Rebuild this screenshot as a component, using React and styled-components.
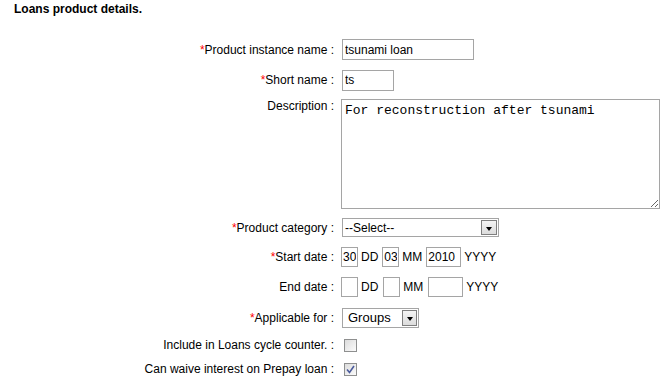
import React from "react";
import styled, { createGlobalStyle } from "styled-components";

const GlobalStyle = createGlobalStyle`
    body {
        margin: 0;
        background: #fff;
        font-family: "Liberation Sans", Arial, sans-serif;
        font-size: 12px;
        color: #000;
    }
`;

const Page = styled.div`
    width: 666px;
    height: 385px;
    padding: 2px 14px 0;
    box-sizing: border-box;
    overflow: hidden;
`;

const Title = styled.h1`
    margin: 0;
    font-size: 12px;
    line-height: 14px;
    font-weight: 700;
`;

const Form = styled.div`
    margin-top: 18px;
    margin-left: -14px;
    display: flex;
    flex-direction: column;
`;

const Row = styled.div`
    display: grid;
    grid-template-columns: 334px auto;
    column-gap: 8px;
    align-items: ${(p) => (p.$top ? "start" : "center")};
    height: ${(p) => p.$h}px;
    padding-top: ${(p) => p.$pt || 0}px;
    box-sizing: border-box;
`;

const Label = styled.label`
    text-align: right;
    white-space: nowrap;
    line-height: 14px;
`;

const Star = styled.span`
    color: #ff0000;
`;

const Field = styled.div`
    display: flex;
    align-items: center;
    margin-left: ${(p) => p.$ml || 0}px;
`;

const TextInput = styled.input`
    box-sizing: border-box;
    width: ${(p) => p.$w}px;
    height: ${(p) => p.$h || 21}px;
    border: 1px solid #a5a5a5;
    padding: 0 2px;
    margin: 0;
    font-family: "Liberation Sans", Arial, sans-serif;
    font-size: 12px;
    color: #000;
    background: #fff;
    outline: none;
`;

const DateBox = styled(TextInput)`
    padding: 0 1px;
`;

const DatePart = styled.span`
    margin: 0 ${(p) => p.$mr || 4}px 0 3px;
    line-height: 14px;
`;

const TextArea = styled.textarea`
    box-sizing: border-box;
    width: 319px;
    height: 110px;
    margin: 0 0 0 -1px;
    border: 1px solid #a5a5a5;
    padding: 3px 3px;
    font-family: "Liberation Mono", "Courier New", monospace;
    font-size: 13px;
    line-height: 15px;
    color: #000;
    resize: both;
    outline: none;
`;

const Select = styled.div`
    box-sizing: border-box;
    width: ${(p) => p.$w}px;
    height: ${(p) => p.$h}px;
    border: 1px solid #a5a5a5;
    display: flex;
    align-items: center;
    justify-content: space-between;
    padding: 1px 1px 1px 2px;
    background: #fff;
    font-size: ${(p) => p.$fs || 12}px;
`;

const SelectText = styled.span`
    line-height: 14px;
    padding-left: ${(p) => p.$pl || 0}px;
`;

const ArrowButton = styled.span`
    box-sizing: border-box;
    width: ${(p) => p.$w || 16}px;
    height: 100%;
    border: 1px solid #7f7f7f;
    background: linear-gradient(#f4f4f4, #dcdcdc);
    display: flex;
    align-items: center;
    justify-content: center;

    &::after {
        content: "";
        border-left: 3.5px solid transparent;
        border-right: 3.5px solid transparent;
        border-top: 4px solid #000;
        margin-top: 2px;
    }
`;

const Check = styled.span`
    box-sizing: border-box;
    width: 13px;
    height: 13px;
    border: 1px solid #8e8f8f;
    background: linear-gradient(135deg, #dcdcdc, #fbfbfb);
    display: flex;
    align-items: center;
    justify-content: center;
`;

function CheckBox({ checked }) {
    return (
        <Check>
            {checked && (
                <svg width="9" height="9" viewBox="0 0 9 9">
                    <path d="M1 4.5 L3.5 7.5 L8 1" fill="none" stroke="#4b5b9c" strokeWidth="1.6" />
                </svg>
            )}
        </Check>
    );
}

export default function App() {
    return (
        <Page>
            <GlobalStyle />
            <Title>Loans product details.</Title>
            <Form>
                <Row $h={31}>
                    <Label><Star>*</Star>Product instance name :</Label>
                    <Field><TextInput $w={132} defaultValue="tsunami loan" /></Field>
                </Row>
                <Row $h={30}>
                    <Label><Star>*</Star>Short name :</Label>
                    <Field><TextInput $w={52} defaultValue="ts" /></Field>
                </Row>
                <Row $h={118} $top $pt={4}>
                    <Label style={{ marginTop: 0 }}>Description :</Label>
                    <Field><TextArea defaultValue="For reconstruction after tsunami" /></Field>
                </Row>
                <Row $h={29}>
                    <Label><Star>*</Star>Product category :</Label>
                    <Field>
                        <Select $w={157} $h={19}>
                            <SelectText>--Select--</SelectText>
                            <ArrowButton />
                        </Select>
                    </Field>
                </Row>
                <Row $h={30}>
                    <Label><Star>*</Star>Start date :</Label>
                    <Field $ml={-1}>
                        <DateBox $w={17} $h={20} defaultValue="30" />
                        <DatePart>DD</DatePart>
                        <DateBox $w={17} $h={20} defaultValue="03" />
                        <DatePart>MM</DatePart>
                        <DateBox $w={35} $h={20} defaultValue="2010" />
                        <DatePart>YYYY</DatePart>
                    </Field>
                </Row>
                <Row $h={30}>
                    <Label>End date :</Label>
                    <Field $ml={-1}>
                        <DateBox $w={17} $h={20} />
                        <DatePart $mr={5}>DD</DatePart>
                        <DateBox $w={17} $h={20} />
                        <DatePart $mr={5}>MM</DatePart>
                        <DateBox $w={35} $h={20} />
                        <DatePart>YYYY</DatePart>
                    </Field>
                </Row>
                <Row $h={31}>
                    <Label><Star>*</Star>Applicable for :</Label>
                    <Field>
                        <Select $w={77} $h={20} $fs={13}>
                            <SelectText $pl={3}>Groups</SelectText>
                            <ArrowButton $w={15} />
                        </Select>
                    </Field>
                </Row>
                <Row $h={24}>
                    <Label>Include in Loans cycle counter. :</Label>
                    <Field $ml={2}><CheckBox /></Field>
                </Row>
                <Row $h={24}>
                    <Label>Can waive interest on Prepay loan :</Label>
                    <Field $ml={2}><CheckBox checked /></Field>
                </Row>
            </Form>
        </Page>
    );
}
